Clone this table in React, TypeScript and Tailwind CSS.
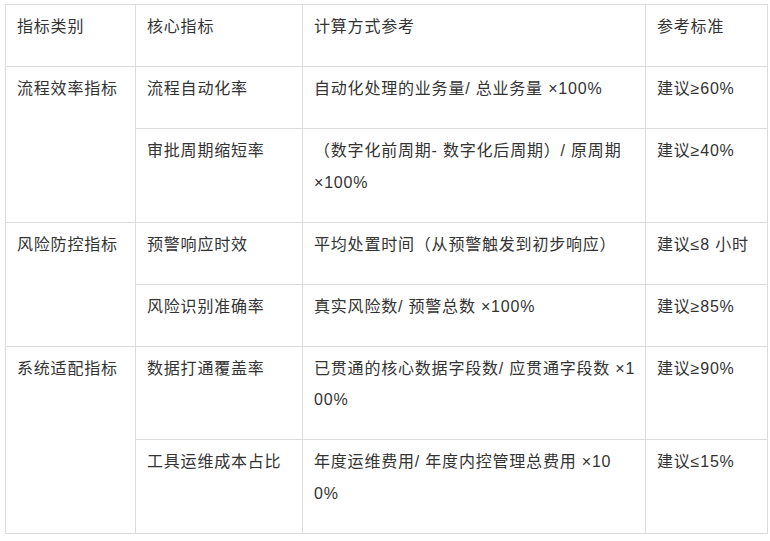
import React from 'react'

type Row = {
    category?: string
    metric: string
    formula: React.ReactNode
    standard: string
}

const rows: Row[] = [
    {
        category: '流程效率指标',
        metric: '流程自动化率',
        formula: '自动化处理的业务量/ 总业务量 ×100%',
        standard: '建议≥60%',
    },
    {
        metric: '审批周期缩短率',
        formula: (
            <>
                （数字化前周期- 数字化后周期）/ 原周期
                <br />
                ×100%
            </>
        ),
        standard: '建议≥40%',
    },
    {
        category: '风险防控指标',
        metric: '预警响应时效',
        formula: '平均处置时间（从预警触发到初步响应）',
        standard: '建议≤8 小时',
    },
    {
        metric: '风险识别准确率',
        formula: '真实风险数/ 预警总数 ×100%',
        standard: '建议≥85%',
    },
    {
        category: '系统适配指标',
        metric: '数据打通覆盖率',
        formula: (
            <>
                已贯通的核心数据字段数/ 应贯通字段数 ×1
                <br />
                00%
            </>
        ),
        standard: '建议≥90%',
    },
    {
        metric: '工具运维成本占比',
        formula: (
            <>
                年度运维费用/ 年度内控管理总费用 ×10
                <br />
                0%
            </>
        ),
        standard: '建议≤15%',
    },
]

const cell = 'border border-[#dcdcdc] align-top pl-[11px] pr-[8px] pt-[6px] pb-[23.5px] whitespace-nowrap'

export default function App() {
    return (
        <div className="min-h-screen bg-white pt-[4px] pl-[5px]">
            <table
                className="table-fixed border-collapse w-[762px] text-[16px] leading-[31.5px] tracking-[0.8px] text-[#333]"
                style={{ fontFamily: '"Liberation Sans", "Noto Sans CJK SC", sans-serif' }}>
                <colgroup>
                    <col className="w-[130px]" />
                    <col className="w-[167px]" />
                    <col className="w-[343px]" />
                    <col className="w-[122px]" />
                </colgroup>
                <thead>
                    <tr>
                        <th className={`${cell} font-normal text-left`}>指标类别</th>
                        <th className={`${cell} font-normal text-left`}>核心指标</th>
                        <th className={`${cell} font-normal text-left`}>计算方式参考</th>
                        <th className={`${cell} font-normal text-left`}>参考标准</th>
                    </tr>
                </thead>
                <tbody>
                    {rows.map((row, i) => (
                        <tr key={i}>
                            {row.category && (
                                <td rowSpan={2} className={cell}>
                                    {row.category}
                                </td>
                            )}
                            <td className={cell}>{row.metric}</td>
                            <td className={cell}>{row.formula}</td>
                            <td className={cell}>{row.standard}</td>
                        </tr>
                    ))}
                </tbody>
            </table>
        </div>
    )
}
